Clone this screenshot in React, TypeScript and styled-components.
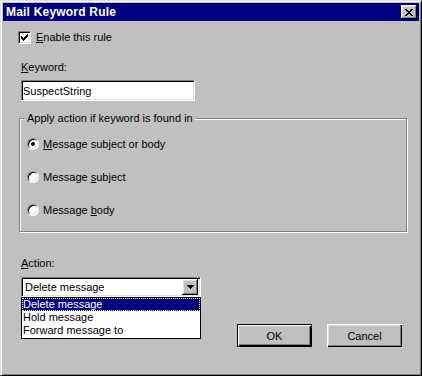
import { createGlobalStyle, styled } from "styled-components";

const GlobalStyle = createGlobalStyle`
  html, body {
    margin: 0;
    padding: 0;
    background: #c0c0c0;
  }
  body {
    font-family: "Liberation Sans", Arial, sans-serif;
    font-size: 11px;
  }
`;

const Window = styled.div`
  box-sizing: border-box;
  width: 422px;
  height: 376px;
  background: #c0c0c0;
  border: 1px solid;
  border-color: #dfdfdf #000 #000 #dfdfdf;
  box-shadow: inset 1px 1px #fff, inset -1px -1px #808080;
  padding: 2px;
  display: flex;
  flex-direction: column;
  color: #000;
  font-family: "Liberation Sans", Arial, sans-serif;
  font-size: 11px;
  line-height: 13px;
`;

const TitleBar = styled.div`
  height: 18px;
  background: #000080;
  display: flex;
  align-items: center;
  justify-content: space-between;
  padding: 0 2px 0 3px;
`;

const TitleText = styled.span`
  color: #fff;
  font-weight: bold;
  font-size: 12px;
  letter-spacing: 0.2px;
`;

const Bevel = styled.div`
  box-sizing: border-box;
  background: #c0c0c0;
  box-shadow: inset -1px -1px #000, inset 1px 1px #fff, inset -2px -2px #808080,
    inset 2px 2px #dfdfdf;
  display: flex;
  align-items: center;
  justify-content: center;
`;

const CloseButton = styled(Bevel)`
  width: 16px;
  height: 14px;
  padding-right: 1px;
`;

const Body = styled.div`
  flex: 1;
  display: flex;
  flex-direction: column;
  align-items: flex-start;
  padding: 10px 17px 0 15px;
`;

const CheckRow = styled.label`
  display: flex;
  align-items: center;
  gap: 5px;
  height: 13px;
`;

const CheckBox = styled.span`
  box-sizing: border-box;
  width: 13px;
  height: 13px;
  background: #fff;
  border: 1px solid;
  border-color: #808080 #fff #fff #808080;
  box-shadow: inset 1px 1px #000, inset -1px -1px #dfdfdf;
  display: flex;
  padding: 2px;
`;

const FieldLabel = styled.div<{ $top: number }>`
  margin: ${(p) => p.$top}px 0 0 3px;
`;

const TextBox = styled.input`
  box-sizing: border-box;
  width: 174px;
  height: 21px;
  margin: 6px 0 0 3px;
  padding: 0 1px;
  border: 1px solid;
  border-color: #808080 #fff #fff #808080;
  box-shadow: inset 1px 1px #000, inset -1px -1px #dfdfdf;
  background: #fff;
  font-family: inherit;
  font-size: 11px;
  color: #000;
  outline: none;
`;

const Group = styled.div`
  position: relative;
  box-sizing: border-box;
  width: 388px;
  height: 114px;
  margin: 17px 0 0 1px;
  border: 1px solid #808080;
  box-shadow: inset 1px 1px #fff, 1px 1px 0 #fff;
  padding: 19px 0 0 7px;
  display: flex;
  flex-direction: column;
  gap: 21px;
`;

const Legend = styled.span`
  position: absolute;
  top: -7px;
  left: 5px;
  padding: 0 2px;
  background: #c0c0c0;
`;

const RadioRow = styled.label`
  display: flex;
  align-items: center;
  gap: 4px;
  height: 12px;
`;

const Radio = styled.span<{ $checked?: boolean }>`
  box-sizing: border-box;
  width: 12px;
  height: 12px;
  border-radius: 50%;
  background: #fff;
  border: 1px solid;
  border-color: #808080 #fff #fff #808080;
  box-shadow: inset 1px 1px #000, inset -1px -1px #dfdfdf;
  display: flex;
  align-items: center;
  justify-content: center;
  &::after {
    content: "";
    width: 4px;
    height: 4px;
    border-radius: 50%;
    background: ${(p) => (p.$checked ? "#000" : "transparent")};
  }
`;

const ComboWrap = styled.div`
  position: relative;
  margin: 7px 0 0 3px;
`;

const Combo = styled.div`
  box-sizing: border-box;
  width: 180px;
  height: 20px;
  background: #fff;
  border: 1px solid;
  border-color: #808080 #fff #fff #808080;
  box-shadow: inset 1px 1px #000, inset -1px -1px #dfdfdf;
  padding: 2px;
  display: flex;
  align-items: center;
  justify-content: space-between;
`;

const ComboText = styled.span`
  padding-left: 1px;
`;

const ArrowButton = styled(Bevel)`
  width: 16px;
  height: 16px;
`;

const DropList = styled.div`
  position: absolute;
  top: 100%;
  left: 0;
  box-sizing: border-box;
  width: 180px;
  height: 42px;
  background: #fff;
  border: 1px solid #000;
  display: flex;
  flex-direction: column;
`;

const DropItem = styled.div<{ $selected?: boolean }>`
  height: 13px;
  padding-left: 1px;
  background: ${(p) => (p.$selected ? "#000080" : "transparent")};
  color: ${(p) => (p.$selected ? "#fff" : "#000")};
  outline: ${(p) => (p.$selected ? "1px dotted #ffff80" : "none")};
  outline-offset: -1px;
`;

const Footer = styled.div`
  align-self: stretch;
  display: flex;
  justify-content: flex-end;
  gap: 15px;
  margin-top: 27px;
`;

const PushButton = styled.button<{ $default?: boolean }>`
  box-sizing: border-box;
  width: 75px;
  height: 23px;
  padding: 0;
  background: #c0c0c0;
  border: ${(p) => (p.$default ? "1px solid #000" : "none")};
  box-shadow: ${(p) =>
    p.$default
      ? "inset 1px 1px #fff, inset -1px -1px #000, inset -2px -2px #808080"
      : "inset 1px 1px #fff, inset -1px -1px #000, inset -2px -2px #808080, inset 2px 2px #dfdfdf"};
  font-family: "Liberation Sans", Arial, sans-serif;
  font-size: 11px;
  color: #000;
`;

const CloseGlyph = () => (
  <svg width="8" height="7" viewBox="0 0 8 7" shapeRendering="crispEdges">
    <path
      fill="#000"
      d="M0 0h2v1H0zM6 0h2v1H6zM1 1h2v1H1zM5 1h2v1H5zM2 2h4v1H2zM3 3h2v1H3zM2 4h4v1H2zM1 5h2v1H1zM5 5h2v1H5zM0 6h2v1H0zM6 6h2v1H6z"
    />
  </svg>
);

const CheckGlyph = () => (
  <svg width="7" height="7" viewBox="0 0 7 7" shapeRendering="crispEdges">
    <path
      fill="#000"
      d="M0 2h1v3H0zM1 3h1v3H1zM2 4h1v3H2zM3 3h1v3H3zM4 2h1v3H4zM5 1h1v3H5zM6 0h1v3H6z"
    />
  </svg>
);

const ArrowGlyph = () => (
  <svg width="7" height="4" viewBox="0 0 7 4" shapeRendering="crispEdges">
    <path fill="#000" d="M0 0h7v1H0zM1 1h5v1H1zM2 2h3v1H2zM3 3h1v1H3z" />
  </svg>
);

const actions = ["Delete message", "Hold message", "Forward message to"];

export default function App() {
  return (
    <>
      <GlobalStyle />
      <Window>
        <TitleBar>
          <TitleText>Mail Keyword Rule</TitleText>
          <CloseButton>
            <CloseGlyph />
          </CloseButton>
        </TitleBar>
        <Body>
          <CheckRow>
            <CheckBox>
              <CheckGlyph />
            </CheckBox>
            <span>
              <u>E</u>nable this rule
            </span>
          </CheckRow>

          <FieldLabel $top={17}>
            <u>K</u>eyword:
          </FieldLabel>
          <TextBox readOnly value="SuspectString" />

          <Group>
            <Legend>Apply action if keyword is found in</Legend>
            <RadioRow>
              <Radio $checked />
              <span>
                <u>M</u>essage subject or body
              </span>
            </RadioRow>
            <RadioRow>
              <Radio />
              <span>
                Message <u>s</u>ubject
              </span>
            </RadioRow>
            <RadioRow>
              <Radio />
              <span>
                Message <u>b</u>ody
              </span>
            </RadioRow>
          </Group>

          <FieldLabel $top={25}>
            <u>A</u>ction:
          </FieldLabel>
          <ComboWrap>
            <Combo>
              <ComboText>Delete message</ComboText>
              <ArrowButton>
                <ArrowGlyph />
              </ArrowButton>
            </Combo>
            <DropList>
              {actions.map((a, i) => (
                <DropItem key={a} $selected={i === 0}>
                  {a}
                </DropItem>
              ))}
            </DropList>
          </ComboWrap>

          <Footer>
            <PushButton $default>OK</PushButton>
            <PushButton>Cancel</PushButton>
          </Footer>
        </Body>
      </Window>
    </>
  );
}
